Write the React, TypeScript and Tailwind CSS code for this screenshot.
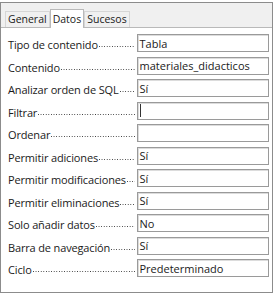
import React from "react";

const rows: { label: string; value: string; caret?: boolean }[] = [
  { label: "Tipo de contenido", value: "Tabla" },
  { label: "Contenido", value: "materiales_didacticos" },
  { label: "Analizar orden de SQL", value: "Sí" },
  { label: "Filtrar", value: "", caret: true },
  { label: "Ordenar", value: "" },
  { label: "Permitir adiciones", value: "Sí" },
  { label: "Permitir modificaciones", value: "Sí" },
  { label: "Permitir eliminaciones", value: "Sí" },
  { label: "Solo añadir datos", value: "No" },
  { label: "Barra de navegación", value: "Sí" },
  { label: "Ciclo", value: "Predeterminado" },
];

export default function App() {
  return (
    <div
      className="w-[276px] h-[297px] bg-white pt-[2px]"
      style={{ fontFamily: '"Open Sans", "Noto Sans", sans-serif' }}
    >
      <div className="w-[273px] h-[291px] border border-[#8c8c8c] flex flex-col text-[11px] text-[#1a1a1a] leading-none">
        <div className="h-[25px] bg-[#f0f0f0] border-b border-[#b9b9b9] flex items-end pl-[4px] text-[10.5px]">
          <div className="h-[16px] px-[2px] flex items-center border border-b-0 border-[#d6d6d6] bg-[#f0f0f0]">
            General
          </div>
          <div className="h-[19px] px-[2px] flex items-center bg-white border border-b-0 border-[#b9b9b9] -mb-px relative z-10">
            Datos
          </div>
          <div className="h-[16px] px-[2px] flex items-center border border-b-0 border-[#d6d6d6] bg-[#f0f0f0]">
            Sucesos
          </div>
        </div>
        <div className="flex flex-col gap-[4.5px] pt-[6px] pl-[7px] pr-[3px]">
          {rows.map((r) => (
            <div key={r.label} className="flex items-center h-[18px]">
              <div className="w-[127px] flex items-end whitespace-nowrap h-[14px]">
                <span className="tracking-[-0.15px]">{r.label}</span>
                <div className="flex-1 ml-[1px] mb-[3px] h-[1px] bg-[linear-gradient(to_right,#3a3a3a_1px,transparent_1px)] bg-[length:2.6px_1px] bg-repeat-x" />
              </div>
              <div className="ml-[2px] w-[133px] h-[18px] border border-[#9a9a9a] shadow-[inset_1px_1px_0_#dcdcdc] bg-white flex items-center pl-[2px]">
                {r.caret ? (
                  <div className="w-[1px] h-[13px] bg-[#333]" />
                ) : (
                  r.value
                )}
              </div>
            </div>
          ))}
        </div>
      </div>
    </div>
  );
}
